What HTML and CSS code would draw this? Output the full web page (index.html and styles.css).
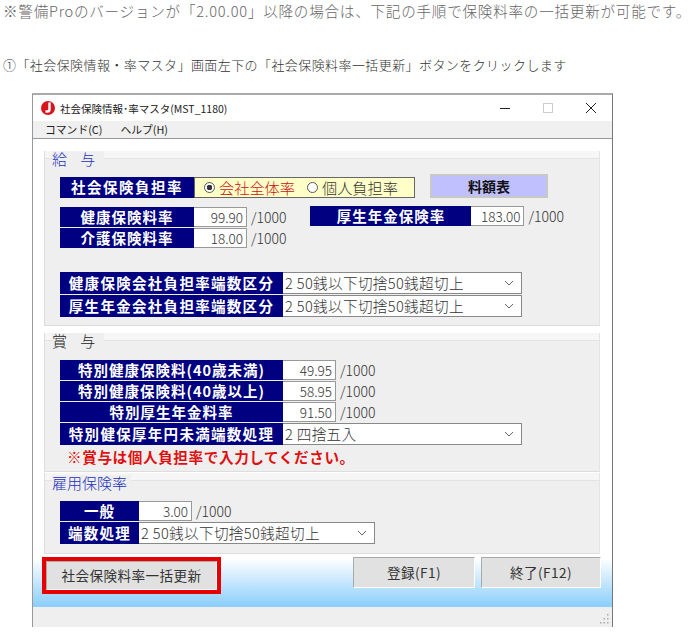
FILE: index.html
```html
<!DOCTYPE html>
<html lang="ja">
<head>
<meta charset="utf-8">
<title>社会保険情報・率マスタ</title>
<link rel="stylesheet" href="styles.css">
</head>
<body>
<p class="note">※警備Proのバージョンが「2.00.00」以降の場合は、下記の手順で保険料率の一括更新が可能です。</p>
<p class="step">①「社会保険情報・率マスタ」画面左下の「社会保険料率一括更新」ボタンをクリックします</p>
<div class="window">
  <div class="titlebar">
    <svg class="app-icon" width="16" height="16" viewBox="0 0 16 16"><circle cx="8" cy="8" r="7" fill="#d8141c"/><path d="M9.5 2.500V9.500Q9.500 11.500 7.500 11.500H5.500" fill="none" stroke="#fff" stroke-width="2.400"/></svg>
    <span class="title">社会保険情報･率マスタ(MST_1180)</span>
    <div class="caption-buttons">
      <svg width="12" height="12" viewBox="0 0 12 12"><path d="M1 6.500H11" stroke="#222" stroke-width="1"/></svg>
      <svg width="12" height="12" viewBox="0 0 12 12"><rect x="1.500" y="1.500" width="9" height="9" fill="none" stroke="#ccc"/></svg>
      <svg width="12" height="12" viewBox="0 0 12 12"><path d="M1 1L11 11M11 1L1 11" stroke="#222" stroke-width="1"/></svg>
    </div>
  </div>
  <div class="menubar"><span>コマンド(C)</span><span>ヘルプ(H)</span></div>
  <div class="content">
    <section class="group group-pay">
      <div class="legend legend-blue"><span>給 与</span></div>
      <div class="row row-rate">
        <div class="label w134">社会保険負担率</div>
        <div class="radio-box">
          <span class="radio on"></span><span class="radio-red">会社全体率</span>
          <span class="radio"></span><span>個人負担率</span>
        </div>
        <div class="table-btn">料額表</div>
      </div>
      <div class="row row-two">
        <div class="label w134 nudge">健康保険料率</div>
        <div class="num w53 nudge">99.90</div>
        <div class="unit nudge">/1000</div>
        <div class="label w161 col2">厚生年金保険率</div>
        <div class="num w53">183.00</div>
        <div class="unit">/1000</div>
      </div>
      <div class="row row-one">
        <div class="label w134">介護保険料率</div>
        <div class="num w53">18.00</div>
        <div class="unit">/1000</div>
      </div>
      <div class="row row-sel first-sel">
        <div class="label w223 tall">健康保険会社負担率端数区分</div>
        <div class="select w239"><span>2 50銭以下切捨50銭超切上</span><svg width="10" height="6" viewBox="0 0 10 6"><path d="M1 1L5 5L9 1" fill="none" stroke="#666"/></svg></div>
      </div>
      <div class="row row-sel">
        <div class="label w223 tall">厚生年金会社負担率端数区分</div>
        <div class="select w239"><span>2 50銭以下切捨50銭超切上</span><svg width="10" height="6" viewBox="0 0 10 6"><path d="M1 1L5 5L9 1" fill="none" stroke="#666"/></svg></div>
      </div>
    </section>
    <section class="group group-bonus">
      <div class="legend legend-short"><span>賞 与</span></div>
      <div class="row row-bonus first-bonus">
        <div class="label w223">特別健康保険料(40歳未満)</div>
        <div class="num w53">49.95</div>
        <div class="unit">/1000</div>
      </div>
      <div class="row row-bonus">
        <div class="label w223">特別健康保険料(40歳以上)</div>
        <div class="num w53">58.95</div>
        <div class="unit">/1000</div>
      </div>
      <div class="row row-bonus">
        <div class="label w223">特別厚生年金料率</div>
        <div class="num w53">91.50</div>
        <div class="unit">/1000</div>
      </div>
      <div class="row row-sel">
        <div class="label w223 tall">特別健保厚年円未満端数処理</div>
        <div class="select w239"><span>2 四捨五入</span><svg width="10" height="6" viewBox="0 0 10 6"><path d="M1 1L5 5L9 1" fill="none" stroke="#666"/></svg></div>
      </div>
      <div class="warning">※賞与は個人負担率で入力してください。</div>
    </section>
    <section class="group group-emp">
      <div class="legend legend-tall legend-blue"><span>雇用保険率</span></div>
      <div class="row row-bonus first-emp">
        <div class="label w79">一般</div>
        <div class="num w53">3.00</div>
        <div class="unit">/1000</div>
      </div>
      <div class="row row-sel">
        <div class="label w79 tall">端数処理</div>
        <div class="select w236"><span>2 50銭以下切捨50銭超切上</span><svg width="10" height="6" viewBox="0 0 10 6"><path d="M1 1L5 5L9 1" fill="none" stroke="#666"/></svg></div>
      </div>
    </section>
    <div class="footer">
      <div class="bulk-frame"><div class="btn bulk">社会保険料率一括更新</div></div>
      <div class="btn save">登録(F1)</div>
      <div class="btn quit">終了(F12)</div>
    </div>
  </div>
  <div class="statusbar">
    <svg width="12" height="12" viewBox="0 0 12 12"><path d="M9 1h1.500v1.500H9zM5.500 5H7v1.500H5.500zM9 5h1.500v1.500H9zM2 9h1.500v1.500H2zM5.500 9H7v1.500H5.500zM9 9h1.500v1.500H9z" fill="#aaa"/></svg>
  </div>
</div>
</body>
</html>
```
FILE: styles.css
```css
* { box-sizing: border-box; }
html, body { margin: 0; padding: 0; background: #fff; }
body {
  width: 690px;
  height: 640px;
  overflow: hidden;
  font-family: "Noto Sans CJK JP", "Noto Sans", sans-serif;
  font-weight: 300;
  color: #222;
}
p { margin: 0; white-space: nowrap; }
.note {
  padding: 0 0 0 3px;
  height: 22px;
  line-height: 22px;
  font-size: 14.6px;
  letter-spacing: 0.74px;
  color: #666;
}
.step {
  margin-top: 33px;
  height: 20px;
  line-height: 20px;
  padding-left: 3px;
  font-size: 13px;
  letter-spacing: 0.42px;
  color: #333;
}
.window {
  margin: 18px 0 0 32px;
  width: 581px;
  height: 534px;
  border-left: 1px solid #999;
  border-right: 1px solid #777;
  border-top: 2px solid #aaa;
  background: #fff;
  display: flex;
  flex-direction: column;
}
.titlebar {
  height: 26px;
  display: flex;
  align-items: center;
  padding-left: 7px;
  flex: none;
}
.app-icon { flex: none; }
.title { margin-left: 4px; font-size: 10.5px; color: #222; white-space: nowrap; font-weight: 400; }
.caption-buttons {
  margin-left: auto;
  display: flex;
  gap: 31px;
  padding-right: 15px;
}
.menubar {
  height: 18px;
  flex: none;
  background: #f0f0f0;
  border-bottom: 1px solid #999;
  display: flex;
  gap: 18px;
  padding-left: 12px;
  font-size: 10.8px;
  line-height: 17px;
  font-weight: 400;
  color: #222;
}
.content { flex: 1; padding: 12px 0 0 0; position: relative; display: flex; flex-direction: column; }
.group {
  margin-left: 11px;
  width: 556px;
  background: #efefef;
  border-right: 1px solid #e4e4e4;
  border-bottom: 1px solid #ddd;
  border-left: 1px solid #ddd;
  flex: none;
}
.group-pay { height: 175px; }
.group-bonus { height: 139px; margin-top: 7px; }
.group-emp { height: 81px; margin-top: 1px; }
.legend {
  height: 15px;
  padding-left: 7px;
  display: flex;
  align-items: center;
  font-size: 15px;
  line-height: 15px;
  color: #222;
  white-space: pre;
  background: linear-gradient(#f6f6f6 7px, #e3e3e3 7px, #e3e3e3 8px, #efefef 8px);
}
.legend span { background: #efefef; padding: 0 4px 0 0; }
.legend-blue { color: #1a2fc0; }
.legend-short { height: 15px; }
.legend-tall { height: 18px; }
.group-pay .legend span, .legend-short span { letter-spacing: 5px; }
.row { display: flex; margin-left: 15px; white-space: nowrap; }
.row-rate { margin-top: 8px; height: 24px; align-items: flex-end; }
.row-two { margin-top: 8px; height: 21px; }
.row-one { margin-top: 1px; height: 20px; }
.row-sel { height: 22px; margin-top: 1px; }
.first-sel { margin-top: 24px; }
.row-bonus { height: 20px; margin-top: 1px; }
.first-bonus { margin-top: 12px; }
.first-emp { margin-top: 10px; }
.nudge { margin-top: 1px; }
.label {
  height: 20px;
  line-height: 19px;
  background: #000080;
  color: #fff;
  font-weight: 700;
  font-size: 14.5px;
  text-align: center;
  letter-spacing: 1px;
  flex: none;
}
.tall { height: 22px; line-height: 21px; letter-spacing: 1.3px; }
.row-rate .label { height: 21px; line-height: 20px; letter-spacing: 1.5px; }
.w134 { width: 134px; }
.w161 { width: 161px; }
.w223 { width: 223px; }
.w79 { width: 79px; }
.w53 { width: 53px; }
.w239 { width: 239px; }
.w236 { width: 236px; }
.col2 { margin-left: 24px; }
.num {
  height: 20px;
  line-height: 19px;
  background: #fff;
  border: 1px solid #999;
  border-left: 0;
  text-align: right;
  padding-right: 3px;
  font-size: 13.5px;
  color: #333;
  flex: none;
}
.unit { margin-left: 4px; line-height: 20px; height: 20px; font-size: 14px; color: #333; flex: none; }
.radio-box {
  width: 221px;
  height: 21px;
  background: #ffffc8;
  border: 1px solid #666;
  display: flex;
  align-items: center;
  padding: 0 0 2px 9px;
  font-size: 15.2px;
  line-height: 18px;
  color: #333;
  flex: none;
}
.radio {
  width: 11px;
  height: 11px;
  border-radius: 50%;
  background: #fff;
  border: 1px solid #555;
  margin: 2px 4px 0 0;
  flex: none;
}
.radio.on { background: radial-gradient(circle, #333 0 2.6px, #fff 3px); }
.radio-red { color: #c81414; margin-right: 12px; }
.table-btn {
  margin-left: 15px;
  width: 118px;
  height: 24px;
  line-height: 20px;
  background: #c0c0ff;
  border: 2px solid #c8c8c8;
  text-align: center;
  font-weight: 700;
  font-size: 14px;
  color: #111;
  flex: none;
}
.select {
  height: 22px;
  background: #fff;
  border: 1px solid #888;
  border-left: 0;
  display: flex;
  align-items: center;
  justify-content: space-between;
  padding: 0 7px 1px 2px;
  font-size: 14.6px;
  line-height: 18px;
  letter-spacing: 0.35px;
  color: #333;
  flex: none;
}
.warning {
  margin: 2px 0 0 22px;
  line-height: 20px;
  font-size: 14.6px;
  font-weight: 700;
  color: #e01010;
  letter-spacing: 0.6px;
}
.footer {
  flex: 1;
  display: flex;
  align-items: flex-start;
  padding: 3px 13px 0 9px;
  background: linear-gradient(#fff, #fff 8%, #8ed0fb 96%, #8ed0fb);
}
.btn {
  height: 31px;
  line-height: 29px;
  background: #e1e1e1;
  border: 1px solid #aaa;
  border-right-color: #fff;
  border-bottom-color: #fff;
  text-align: center;
  font-size: 13.6px;
  font-weight: 400;
  color: #333;
  letter-spacing: 0.4px;
  flex: none;
}
.bulk-frame { border: 4px solid #e60000; width: 179px; height: 37px; flex: none; }
.bulk { width: 171px; height: 29px; line-height: 27px; }
.save { margin-left: 132px; width: 122px; }
.quit { margin-left: 6px; width: 120px; }
.statusbar {
  height: 20px;
  flex: none;
  background: #efefef;
  display: flex;
  justify-content: flex-end;
  align-items: flex-end;
  padding: 0 2px 2px 0;
}
```
